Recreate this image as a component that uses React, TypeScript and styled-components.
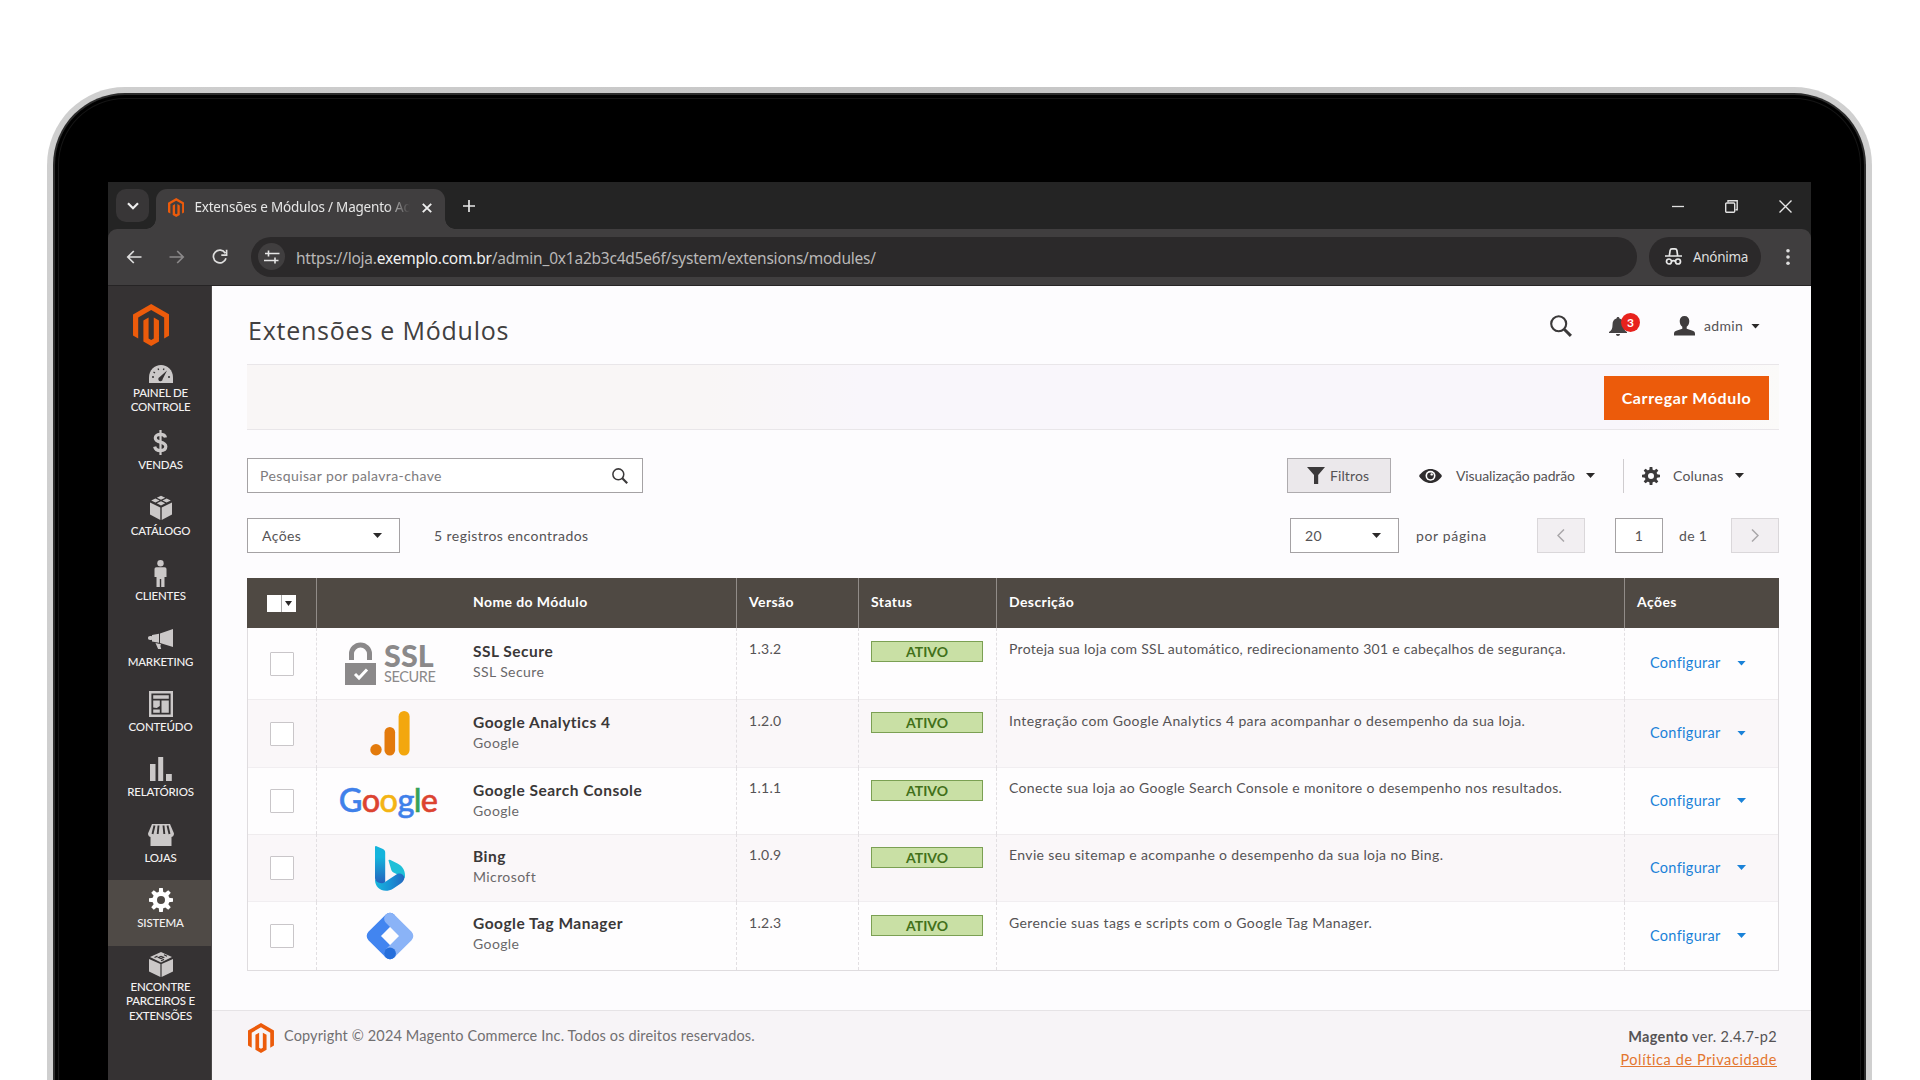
import React from "react";
import styled, { createGlobalStyle } from "styled-components";

const COLORS = {
  ORANGE: "#ec5b0b",
  SIDEBAR: "#353233",
  TOOLBAR: "#403e3f",
  STRIP: "#242424",
  PILL: "#2b292a",
  HEAD: "#4f4943",
  TEXT: "#555355",
  DARK: "#3a3838",
  BLUE: "#1a82d8",
  ICON: "#cbc8c8",
};

const UI_FONT = `"Noto Sans", "Open Sans", sans-serif`;
const PAGE_FONT = `Lato, "Noto Sans", sans-serif`;

const GlobalStyle = createGlobalStyle`
  * { box-sizing: border-box; }
  html, body { margin: 0; padding: 0; background: #fff; overflow: hidden; }
  svg { display: block; flex: none; }
`;

const Page = styled.div`
  width: 1920px;
  height: 1080px;
  overflow: hidden;
  padding: 87px 48px 0 47px;
  background: #fff;
`;

const Laptop = styled.div`
  height: 1100px;
  padding: 6px 6px 0;
  border-radius: 78px 78px 0 0;
  background: linear-gradient(90deg, #cfcfcf, #c6c6c6 50%, #d0d0d0);
`;

const Bezel = styled.div`
  height: 100%;
  padding: 87px 53px 0;
  border: 2px solid #2c2c2c;
  border-bottom: 0;
  border-radius: 72px 72px 0 0;
  background: #000;
  box-shadow: inset 0 0 0 3px #000, inset 0 0 0 4px #151515;
`;

const Screen = styled.div`
  width: 1703px;
  height: 898px;
  overflow: hidden;
  background: ${COLORS.STRIP};
  font-family: ${PAGE_FONT};
`;

/* browser chrome */

const TabStrip = styled.div`
  display: flex;
  align-items: flex-end;
  height: 47px;
  padding-left: 8px;
  color: #e6e6e6;
  font-family: ${UI_FONT};
`;

const TabSearch = styled.div`
  display: flex;
  align-items: center;
  justify-content: center;
  width: 33px;
  height: 33px;
  margin: 0 7px 7px 0;
  border-radius: 10px;
  background: #383637;
`;

const Tab = styled.div`
  position: relative;
  display: flex;
  align-items: center;
  width: 289px;
  height: 40px;
  padding: 0 13px 3px 12px;
  border-radius: 11px 11px 0 0;
  background: ${COLORS.TOOLBAR};

  &::before,
  &::after {
    content: "";
    position: absolute;
    bottom: 0;
    width: 10px;
    height: 10px;
  }
  &::before {
    left: -10px;
    background: radial-gradient(circle at 0 0, transparent 9.5px, ${COLORS.TOOLBAR} 10px);
  }
  &::after {
    right: -10px;
    background: radial-gradient(circle at 100% 0, transparent 9.5px, ${COLORS.TOOLBAR} 10px);
  }
`;

const TabTitle = styled.div`
  flex: 1;
  margin: -1px 0 0 10px;
  overflow: hidden;
  white-space: nowrap;
  font-size: 13.5px;
  letter-spacing: -0.2px;
  mask-image: linear-gradient(90deg, #000 192px, transparent 216px);
`;

const NewTab = styled.div`
  margin: 0 0 17px 18px;
`;

const WindowButtons = styled.div`
  display: flex;
  align-items: center;
  gap: 41px;
  margin: 0 19px 16px auto;
`;

const Toolbar = styled.div`
  display: flex;
  align-items: center;
  height: 57px;
  padding: 0 18px 1px 18px;
  border-radius: 9px 9px 0 0;
  border-bottom: 1px solid #262425;
  background: ${COLORS.TOOLBAR};
  font-family: ${UI_FONT};
  color: #dedede;
`;

const NavButtons = styled.div`
  display: flex;
  align-items: center;
  gap: 27px;
  width: 125px;
`;

const UrlBar = styled.div`
  display: flex;
  align-items: center;
  width: 1386px;
  height: 40px;
  padding-left: 7px;
  border-radius: 20px;
  background: ${COLORS.PILL};
`;

const SiteInfo = styled.div`
  display: flex;
  align-items: center;
  justify-content: center;
  width: 27px;
  height: 27px;
  margin-right: 11px;
  border-radius: 50%;
  background: #403e3f;
`;

const UrlText = styled.div`
  padding-top: 2px;
  font-size: 15.5px;
  letter-spacing: -0.22px;
  color: #b9b7b7;
  white-space: nowrap;

  b { font-weight: 400; color: #f1f1f1; }
`;

const Incognito = styled.div`
  display: flex;
  align-items: center;
  gap: 11px;
  width: 112px;
  height: 40px;
  margin: 0 24px 0 12px;
  padding-left: 16px;
  border-radius: 20px;
  background: ${COLORS.PILL};
  font-size: 13.5px;
  letter-spacing: -0.3px;
`;

/* admin shell */

const Shell = styled.div`
  display: flex;
  height: 794px;
`;

const Sidebar = styled.nav`
  width: 104px;
  height: 100%;
  padding-top: 18px;
  border-right: 1px solid #4b4849;
  background: ${COLORS.SIDEBAR};
`;

const SidebarLogo = styled.div`
  height: 46px;
  padding-left: 25px;
`;

const MenuItem = styled.div<{ $height: number; $active?: boolean }>`
  display: flex;
  flex-direction: column;
  align-items: center;
  height: ${({ $height }) => $height}px;
  padding-left: 2px;
  background: ${({ $active }) => ($active ? "#4f4a46" : "transparent")};
  color: ${({ $active }) => ($active ? "#fff" : COLORS.ICON)};
`;

const MenuIcon = styled.div<{ $drop?: number; $height?: number }>`
  display: flex;
  align-items: center;
  height: ${({ $height }) => $height ?? 36}px;
  padding-top: ${({ $drop }) => $drop ?? 4}px;
`;

const MenuLabel = styled.div`
  color: #f3f1f1;
  font-size: 11.5px;
  font-weight: 500;
  line-height: 14.3px;
  letter-spacing: -0.2px;
  text-align: center;
  white-space: pre-line;
`;

const Main = styled.main`
  display: flex;
  flex-direction: column;
  flex: 1;
  background: #fdfcfe;
  color: ${COLORS.TEXT};
`;

const Header = styled.header`
  display: flex;
  height: 78px;
  padding: 0 51px 0 36px;
`;

const Title = styled.h1`
  flex: 1;
  margin: 26px 0 0;
  font-family: "Open Sans", sans-serif;
  font-size: 25px;
  line-height: 36px;
  font-weight: 400;
  letter-spacing: 0.77px;
  color: #413f40;
`;

const HeaderTools = styled.div`
  display: flex;
  align-items: center;
  height: 24px;
  margin-top: 28px;
`;

const Notifications = styled.div`
  position: relative;
  margin: 0 47px 0 37px;
`;

const Badge = styled.span`
  position: absolute;
  top: -4px;
  left: 12px;
  width: 19px;
  height: 19px;
  border-radius: 50%;
  background: #e8221d;
  color: #fff;
  font-size: 12px;
  font-weight: 700;
  line-height: 19px;
  text-align: center;
`;

const UserName = styled.span`
  width: 47px;
  margin: -1px 0 0 9px;
  font-size: 14px;
  letter-spacing: 0.35px;
`;

const Caret = styled.i<{ $color?: string; $width?: number }>`
  flex: none;
  width: ${({ $width }) => $width || 9}px;
  height: 5px;
  background: ${({ $color }) => $color || "#2b2929"};
  clip-path: polygon(0 0, 100% 0, 50% 100%);
`;

const ActionBand = styled.div`
  display: flex;
  align-items: center;
  justify-content: flex-end;
  height: 66px;
  margin: 0 32px 0 35px;
  padding: 2px 10px 0 0;
  border: solid #e9e6e9;
  border-width: 1px 0;
  background: linear-gradient(90deg, #f9f6f6 30%, #f9f6fb 40%, #f9f6fb 90%, #fbfaf9);
`;

const UploadButton = styled.button`
  width: 165px;
  height: 44px;
  padding: 0 0 2px;
  border: 0;
  background: ${COLORS.ORANGE};
  color: #fff;
  font-family: inherit;
  font-size: 16px;
  font-weight: 700;
  letter-spacing: 0.62px;
`;

const ControlRow = styled.div<{ $top: number }>`
  display: flex;
  align-items: center;
  height: 35px;
  margin: ${({ $top }) => $top}px 32px 0 35px;
  font-size: 14px;
  letter-spacing: 0.4px;
  white-space: nowrap;
`;

const Field = styled.div<{ $width: number; $left?: number; $right?: number; $muted?: boolean }>`
  display: flex;
  align-items: center;
  justify-content: space-between;
  width: ${({ $width }) => $width}px;
  height: 35px;
  padding: 0 ${({ $right }) => $right ?? 17}px 0 ${({ $left }) => $left ?? 14}px;
  border: 1px solid #a5a2a4;
  background: #fff;
  color: ${({ $muted }) => ($muted ? "#7d7b7d" : COLORS.TEXT)};
`;

const Spacer = styled.div`
  flex: 1;
`;

const FilterButton = styled.div`
  display: flex;
  align-items: center;
  gap: 5px;
  width: 104px;
  height: 35px;
  margin-right: 28px;
  padding-left: 19px;
  border: 1px solid #aeabae;
  background: #ebe8eb;
  letter-spacing: 0.1px;
`;

const ControlText = styled.span<{ $width: number; $left?: number; $track?: number }>`
  width: ${({ $width }) => $width}px;
  margin-left: ${({ $left }) => $left ?? 0}px;
  letter-spacing: ${({ $track }) => $track ?? 0.3}px;
`;

const Divider = styled.div`
  width: 1px;
  height: 34px;
  margin: 0 18px 0 28px;
  background: #cfcccf;
`;

const PageButton = styled.div`
  display: flex;
  align-items: center;
  justify-content: center;
  width: 48px;
  height: 35px;
  border: 1px solid #dad7da;
  background: #f2eff2;
`;

const PageInput = styled.div`
  display: flex;
  align-items: center;
  justify-content: center;
  width: 48px;
  height: 35px;
  margin-left: 30px;
  border: 1px solid #a5a2a4;
  background: #fff;
`;

/* grid */

const Grid = styled.div`
  width: 1532px;
  margin: 25px 0 0 35px;
  border: 1px solid #dfdcdf;
  border-top: 0;
`;

const COLUMNS = "69px 420px 122px 138px 628px 1fr";

const HeadRow = styled.div`
  display: grid;
  grid-template-columns: ${COLUMNS};
  height: 50px;
  margin: 0 -1px;
  padding: 0 1px;
  background: ${COLORS.HEAD};
`;

const HeadCell = styled.div<{ $left: number }>`
  padding-left: ${({ $left }) => $left}px;
  border-right: 1px solid #918c88;
  color: #fff;
  font-size: 14px;
  font-weight: 700;
  line-height: 48px;
  letter-spacing: 0.4px;

  &:last-child { border-right: 0; }
`;

const SelectAll = styled.div`
  display: flex;
  align-items: center;
  width: 29px;
  height: 17px;
  margin-top: 17px;
  padding-left: 15px;
  background: linear-gradient(90deg, #fff 14px, #aaa 14px, #aaa 15px, #fff 15px);

  i { margin: 0 3px; }
`;

const Row = styled.div<{ $height: number }>`
  display: grid;
  grid-template-columns: ${COLUMNS};
  height: ${({ $height }) => $height}px;

  &:nth-child(odd) {
    background: #faf7f9;
    box-shadow: inset 0 1px #efecee, inset 0 -1px #f1eef1;
  }
  &:nth-child(even) { background: #fefdfe; }
`;

const Cell = styled.div<{ $left?: number; $top?: number; $track?: number }>`
  padding: ${({ $top }) => $top ?? 0}px 0 0 ${({ $left }) => $left ?? 0}px;
  border-right: 1px dashed #e2dfe2;
  font-size: 14px;
  line-height: 20px;
  letter-spacing: ${({ $track }) => $track ?? 0.3}px;
  white-space: nowrap;

  &:last-child { border-right: 0; }
`;

const CheckCell = styled(Cell)`
  display: flex;
  align-items: center;
  padding: 0 0 0 22px;
`;

const CheckBox = styled.div`
  width: 24px;
  height: 24px;
  border: 1px solid #c9c6c9;
  border-radius: 1px;
  background: #fff;
`;

const ModuleCell = styled(Cell)`
  display: flex;
  padding-top: 0;
`;

const ModuleLogo = styled.div`
  display: flex;
  align-items: center;
  justify-content: center;
  width: 145px;
  margin-right: 11px;
`;

const ModuleInfo = styled.div<{ $top: number }>`
  padding-top: ${({ $top }) => $top}px;
`;

const ModuleName = styled.div`
  font-size: 15.5px;
  font-weight: 700;
  line-height: 22px;
  letter-spacing: 0.5px;
  color: ${COLORS.DARK};
`;

const ModuleVendor = styled.div`
  line-height: 20px;
  letter-spacing: 0.4px;
  color: #6a686a;
`;

const Status = styled.div`
  width: 112px;
  height: 21px;
  border: 1px solid #7ba053;
  background: #c9e0a5;
  color: #42701a;
  font-size: 14px;
  font-weight: 700;
  line-height: 19px;
  letter-spacing: 0;
  text-align: center;
`;

const ActionCell = styled(Cell)`
  display: flex;
  align-items: center;
  padding: 0 0 1px 25px;
  color: ${COLORS.BLUE};
`;

const ActionLabel = styled.span`
  width: 87px;
  font-size: 14.5px;
`;

const Footer = styled.footer`
  display: flex;
  flex: 1;
  margin-top: 39px;
  padding: 12px 34px 0 36px;
  border-top: 1px solid #e6e3e6;
  background: #f7f4f7;
  font-size: 14.5px;
  line-height: 24px;
`;

const Copyright = styled.div`
  flex: 1;
  margin-left: 10px;
  padding-top: 1px;
  letter-spacing: 0.14px;
  color: #716f71;
`;

const Version = styled.div`
  padding-top: 2px;
  line-height: 23px;
  text-align: right;
  letter-spacing: 0.32px;

  a {
    color: #e3762f;
    letter-spacing: 0.6px;
    text-decoration: underline;
  }
`;

/* logos */

const GoogleWord = styled.div`
  display: flex;
  margin: -3px 0 0 -3px;
  font-size: 32.5px;
  line-height: 36px;
  letter-spacing: -0.7px;
  font-weight: 500;
  -webkit-text-stroke: 0.5px currentColor;
`;

const Letter = styled.span<{ $color: string }>`
  color: ${({ $color }) => $color};
`;

const SslLogo = styled.div`
  display: flex;
  gap: 8px;
  padding-left: 1px;
  color: #8b898a;
`;

const SslText = styled.div`
  width: 51px;
  padding-top: 1px;

  strong {
    display: block;
    font-size: 30.5px;
    font-weight: 900;
    line-height: 26px;
    letter-spacing: 0.1px;
  }
  span {
    display: block;
    font-size: 14.5px;
    line-height: 18px;
    letter-spacing: -0.4px;
  }
`;

const Magento: React.FC<{ size: number }> = ({ size }) => (
  <svg width={size * 0.866} height={size} viewBox="1.6 0 20.8 24" fill={COLORS.ORANGE}>
    <path d="M12 24l-4.455-2.572v-12l2.97-1.715v12.001l1.485.902 1.485-.902V7.713l2.971 1.715v12L12 24zM22.391 6v12l-2.969 1.714V7.713L12 3.43 4.574 7.713v12.001L1.609 18V6L12 0l10.391 6z" />
  </svg>
);

const SslSecure = () => (
  <SslLogo>
    <svg width="31" height="44" viewBox="0 0 31 44">
      <path d="M6.5 19V13a9 9 0 0 1 18 0v6" fill="none" stroke="#8b898a" strokeWidth="5" />
      <path d="M0 22h31v22H0z" fill="#8b898a" />
      <path d="M10 33l4 4 8-8.5" fill="none" stroke="#fff" strokeWidth="3" />
    </svg>
    <SslText>
      <strong>SSL</strong>
      <span>SECURE</span>
    </SslText>
  </SslLogo>
);

const Analytics = () => (
  <svg width="40" height="45" viewBox="0 0 40 45">
    <circle cx="6" cy="38.7" r="5.7" fill="#e37a0c" />
    <rect x="14.5" y="16" width="10.6" height="28.5" rx="5.3" fill="#e37a0c" />
    <rect x="28.6" y="0" width="11" height="44.5" rx="5.5" fill="#f3a70e" />
  </svg>
);

const Google = () => (
  <GoogleWord>
    <Letter $color="#3f80ea">G</Letter>
    <Letter $color="#dc4330">o</Letter>
    <Letter $color="#f4b414">o</Letter>
    <Letter $color="#3f80ea">g</Letter>
    <Letter $color="#36a257">l</Letter>
    <Letter $color="#dc4330">e</Letter>
  </GoogleWord>
);

const Bing = () => (
  <svg width="30" height="45" viewBox="0 0 30 45">
    <defs>
      <linearGradient id="stem" x1="0" y1="0" x2="0" y2="1">
        <stop offset="0.3" stopColor="#14b4dc" />
        <stop offset="1" stopColor="#2461bd" />
      </linearGradient>
      <linearGradient id="hook" x1="0" y1="0" x2="1" y2="0">
        <stop offset="0" stopColor="#18b8dc" />
        <stop offset="0.5" stopColor="#1893d6" />
        <stop offset="1" stopColor="#2368bf" />
      </linearGradient>
    </defs>
    <path d="M13.5 14.5c0-1 1-1 2-.5l7 3.5c4.500 2.200 7.500 6.500 7.500 11.500v3l-7.500-3.500-4-2c-1-.6-1.700-1.300-2.200-2.500z" fill="#1fc0d8" />
    <path d="M0 32c0 3 5 5 10 4l12.500-8.300c4-1 8 2 6.500 5.800-.8 2-2 3.200-4 4.500l-7 4.800C9 48 0 42.500 0 34z" fill="url(#hook)" />
    <path d="M0 1c0-.8.6-1.200 1.500-.8L8 3c1.500.8 2.200 1.800 2.200 3.500V36c-4 3-10.200 0-10.200-4z" fill="url(#stem)" />
  </svg>
);

const TagManager = () => (
  <svg width="48" height="48" viewBox="0 0 48 48" fill="none" strokeWidth="11.800" strokeLinejoin="round" strokeLinecap="round">
    <path d="M24 6.600L6.600 24 24 41.400" stroke="#4285f0" />
    <path d="M24 6.600L41.400 24 24 41.400" stroke="#8ab3f7" />
    <circle cx="24" cy="41.400" r="5.900" fill="#256edb" />
  </svg>
);

/* sidebar icons */

const DashboardIcon = () => (
  <svg width="24" height="18" viewBox="0 0 24 18">
    <path d="M0 18v-5.500C0 5 5.500 0 12 0s12 5 12 12.500V18z" fill="currentColor" />
    <path d="M3 12h2M4.500 7l1.500 1M9 3.500l.7 1.600M15 3.500l-.6 1.600M21 12h-2" stroke="#353233" strokeWidth="1.300" />
    <path d="M18 5.500l-4.300 8.600a2.200 2.200 0 1 1-3-2z" fill="#353233" />
  </svg>
);

const DollarIcon = () => (
  <svg width="15" height="25" viewBox="0 0 15 25" fill="none" stroke="currentColor">
    <path d="M12.500 7.500C12 5.300 10 4.300 7.500 4.300 4.600 4.300 2.300 5.600 2.300 8c0 5.500 10.500 2.800 10.500 8.600 0 2.600-2.300 4-5.300 4-3.200 0-5.300-1.400-5.800-4" strokeWidth="3.200" />
    <path d="M7.500 0v25" strokeWidth="2.200" />
  </svg>
);

const CubeIcon = () => (
  <svg width="22" height="25" viewBox="0 0 22 25" fill="currentColor">
    <path d="M0 7.500l10.300 5V25L0 19.500zM22 7.500l-10.300 5V25L22 19.500z" />
    <path d="M11 0l4.200 2L11 4 6.800 2zM5.400 2.700l4.200 2-4.200 2-4.200-2zM16.600 2.700l4.200 2-4.200 2-4.200-2zM11 5.400l4.200 2-4.200 2.200-4.200-2.200z" transform="translate(0 .8)" />
  </svg>
);

const PartnersIcon = () => (
  <svg width="24" height="25" viewBox="0 0 24 25" fill="currentColor">
    <path d="M0 7l11.400 5V25L0 19.500zM24 7l-11.400 5V25L24 19.500z" />
    <path d="M12 0l11 5-11 5.500L1 5z" />
    <path d="M5.500 5.500l3-1.400M15 2.800l3 1.400M12 8.800l3-1.400M9.500 5.500l2.500 1 2.500-1.200-2.500-1z" fill="none" stroke="#353233" strokeWidth="1.200" />
  </svg>
);

const PersonIcon = () => (
  <svg width="13" height="27" viewBox="0 0 13 27" fill="currentColor">
    <circle cx="6.500" cy="3.200" r="3.200" />
    <path d="M2.500 7.200h8c1.400 0 2 .8 2 2V17h-2v10H7.200v-8H5.800v8H2.500V17h-2V9.200c0-1.200.6-2 2-2z" />
  </svg>
);

const MegaphoneIcon = () => (
  <svg width="25" height="20" viewBox="0 0 25 20" fill="currentColor">
    <path d="M25 0v18L12 14V4.500zM11 4.800v9l-7-1.200v-1.800C1 11.500 0 10.500 0 9s1-2.500 4-1.800V6z" />
    <path d="M7.500 14l5.500 1.300-.6 1.700.8 3-3 .2z" />
  </svg>
);

const ContentIcon = () => (
  <svg width="24" height="26" viewBox="0 0 24 26">
    <path d="M1.200 1.200h21.600v23.600H1.200z" fill="none" stroke="currentColor" strokeWidth="2.400" />
    <path d="M4.200 4.200h15.600v3.600H4.200zM12.500 9.500h7.300v12.300h-7.300zM4.200 9.500h6.600v5.500l-3 2-3.600-.6zM4.200 18.500h6.600v3.300H4.200z" fill="currentColor" />
  </svg>
);

const ReportsIcon = () => (
  <svg width="22" height="24" viewBox="0 0 22 24" fill="currentColor">
    <path d="M0 7h5.500v17H0zM8.200 0h5v24h-5zM16 17h5.800v7H16z" />
  </svg>
);

const StoreIcon = () => (
  <svg width="26" height="22" viewBox="0 0 26 22" fill="currentColor">
    <path d="M2.500 12h21v10h-21z" />
    <path d="M4 0h18l4 9.500c0 2.500-1.500 3.500-3 3.500H3c-1.500 0-3-1-3-3.500z" />
    <path d="M6.500 1.500L4.500 10M10.500 1.500L9.700 10M15.500 1.500l.8 8.500M19.500 1.500l2 8.500" stroke="#353233" strokeWidth="1.900" />
  </svg>
);

const TEETH = [0, 45, 90, 135, 180, 225, 270, 315];

const GearIcon: React.FC<{ size: number; color?: string }> = ({ size, color = "currentColor" }) => (
  <svg width={size} height={size} viewBox="0 0 24 24">
    <circle cx="12" cy="12" r="6.300" fill="none" stroke={color} strokeWidth="4.600" />
    {TEETH.map((angle) => (
      <path key={angle} d="M9.700 4.500l.5-4.500h3.600l.5 4.500z" fill={color} transform={`rotate(${angle} 12 12)`} />
    ))}
  </svg>
);

const SearchIcon: React.FC<{ size: number }> = ({ size }) => (
  <svg width={size} height={size} viewBox="0 0 22 22" fill="none" stroke="#3b393a">
    <circle cx="8.700" cy="8.700" r="7.500" strokeWidth="2.100" />
    <path d="M14.200 14.200l6.700 6.700" strokeWidth="3" />
  </svg>
);

const MENU = [
  { label: "PAINEL DE\nCONTROLE", icon: <DashboardIcon />, height: 72.4, drop: 11 },
  { label: "VENDAS", icon: <DollarIcon />, height: 65.4 },
  { label: "CATÁLOGO", icon: <CubeIcon />, height: 65.4 },
  { label: "CLIENTES", icon: <PersonIcon />, height: 65.4 },
  { label: "MARKETING", icon: <MegaphoneIcon />, height: 65.4 },
  { label: "CONTEÚDO", icon: <ContentIcon />, height: 65.4 },
  { label: "RELATÓRIOS", icon: <ReportsIcon />, height: 65.4 },
  { label: "LOJAS", icon: <StoreIcon />, height: 65.4 },
  { label: "SISTEMA", icon: <GearIcon size={24} />, height: 65.4, active: true },
  { label: "ENCONTRE\nPARCEIROS E\nEXTENSÕES", icon: <PartnersIcon />, height: 90, iconHeight: 34.5 },
];

const MODULES = [
  {
    name: "SSL Secure", vendor: "SSL Secure", version: "1.3.2", logo: <SslSecure />,
    height: 71, top: 12, textTop: 11, badgeTop: 13, track: 0.28,
    text: "Proteja sua loja com SSL automático, redirecionamento 301 e cabeçalhos de segurança.",
  },
  {
    name: "Google Analytics 4", vendor: "Google", version: "1.2.0", logo: <Analytics />,
    height: 69, top: 12, textTop: 12, badgeTop: 13, track: 0.39,
    text: "Integração com Google Analytics 4 para acompanhar o desempenho da sua loja.",
  },
  {
    name: "Google Search Console", vendor: "Google", version: "1.1.1", logo: <Google />,
    height: 66, top: 11, textTop: 10, badgeTop: 12, track: 0.35,
    text: "Conecte sua loja ao Google Search Console e monitore o desempenho nos resultados.",
  },
  {
    name: "Bing", vendor: "Microsoft", version: "1.0.9", logo: <Bing />,
    height: 68, top: 11, textTop: 11, badgeTop: 13, track: 0.37,
    text: "Envie seu sitemap e acompanhe o desempenho da sua loja no Bing.",
  },
  {
    name: "Google Tag Manager", vendor: "Google", version: "1.2.3", logo: <TagManager />,
    height: 68, top: 10, textTop: 11, badgeTop: 13, track: 0.39,
    text: "Gerencie suas tags e scripts com o Google Tag Manager.",
  },
];

const Browser: React.FC = () => (
  <>
    <TabStrip>
      <TabSearch>
        <svg width="12" height="8" viewBox="0 0 12 8" fill="none" stroke="#eee" strokeWidth="2.200">
          <path d="M1 1.200l5 5 5-5" />
        </svg>
      </TabSearch>
      <Tab>
        <Magento size={19} />
        <TabTitle>Extensões e Módulos / Magento Ad</TabTitle>
        <svg width="10" height="10" viewBox="0 0 10 10" stroke="#eee" strokeWidth="1.900">
          <path d="M.8.8l8.400 8.400M9.200.8L.8 9.200" />
        </svg>
      </Tab>
      <NewTab>
        <svg width="12" height="12" viewBox="0 0 12 12" stroke="#e6e6e6" strokeWidth="1.700">
          <path d="M6 0v12M0 6h12" />
        </svg>
      </NewTab>
      <WindowButtons>
        <svg width="12" height="13" viewBox="0 0 12 13" stroke="#e0e0e0" strokeWidth="1.300">
          <path d="M0 6.500h12" />
        </svg>
        <svg width="13" height="13" viewBox="0 0 13 13" fill="none" stroke="#e0e0e0" strokeWidth="1.400">
          <rect x=".7" y="3" width="9" height="9.300" rx="1" />
          <path d="M3 2.500V.8h9.200v9H10.500" />
        </svg>
        <svg width="13" height="13" viewBox="0 0 13 13" stroke="#e6e6e6" strokeWidth="1.400">
          <path d="M.5.5l12 12M12.500.5l-12 12" />
        </svg>
      </WindowButtons>
    </TabStrip>
    <Toolbar>
      <NavButtons>
        <svg width="16" height="14" viewBox="0 0 16 14" fill="none" stroke="#dedede" strokeWidth="1.700">
          <path d="M15.500 7H1.800M7.800 1L1.800 7l6 6" />
        </svg>
        <svg width="16" height="14" viewBox="0 0 16 14" fill="none" stroke="#8b898a" strokeWidth="1.700">
          <path d="M.5 7h13.700M8.200 1l6 6-6 6" />
        </svg>
        <svg width="16" height="16" viewBox="0 0 16 16" fill="none" stroke="#dedede" strokeWidth="1.700">
          <path d="M14 9.200A6.400 6.400 0 1 1 13.300 4.200M14.600.8v5.400H9.300" />
        </svg>
      </NavButtons>
      <UrlBar>
        <SiteInfo>
          <svg width="16" height="14" viewBox="0 0 16 14" fill="none" stroke="#e6e6e6" strokeWidth="1.600">
            <path d="M1 3.500h14.500M4.500 .5v6M0 10.500h14.500M11 7.500v6" />
          </svg>
        </SiteInfo>
        <UrlText>
          https://loja.<b>exemplo.com.br</b>/admin_0x1a2b3c4d5e6f/system/extensions/modules/
        </UrlText>
      </UrlBar>
      <Incognito>
        <svg width="17" height="17" viewBox="0 0 17 17" fill="none" stroke="#e8e8e8" strokeWidth="1.700">
          <path d="M0 8h17M4.300 8l.8-5.500C5.300 1.300 6 .9 7 .9h3c1 0 1.700.4 1.900 1.600L12.700 8M6.500 13.200q2-1.200 4 0" />
          <circle cx="4" cy="13.500" r="2.500" />
          <circle cx="13" cy="13.500" r="2.500" />
        </svg>
        Anónima
      </Incognito>
      <svg width="6" height="18" viewBox="0 0 6 18" fill="#dedede">
        <circle cx="3" cy="2.800" r="1.800" />
        <circle cx="3" cy="9" r="1.800" />
        <circle cx="3" cy="15.200" r="1.800" />
      </svg>
    </Toolbar>
  </>
);

const Controls: React.FC = () => (
  <>
    <ControlRow $top={28}>
      <Field $width={396} $left={12} $right={14} $muted>
        Pesquisar por palavra-chave
        <SearchIcon size={16} />
      </Field>
      <Spacer />
      <FilterButton>
        <svg width="18" height="17" viewBox="0 0 18 17" fill="#3b393a">
          <path d="M0 0h18l-6.800 8v9H7V8z" />
        </svg>
        Filtros
      </FilterButton>
      <svg width="23" height="14" viewBox="0 0 23 14">
        <path d="M0 7c3-4.700 7-7 11.500-7S20 2.300 23 7c-3 4.700-7 7-11.500 7S3 11.700 0 7z" fill="#2f2d2e" />
        <circle cx="11.500" cy="6.800" r="5" fill="#fff" />
        <circle cx="11.500" cy="6.800" r="3.400" fill="#2f2d2e" />
        <circle cx="12.700" cy="5.400" r="1.200" fill="#fff" />
      </svg>
      <ControlText $width={130} $left={14} $track={-0.13}>Visualização padrão</ControlText>
      <Caret />
      <Divider />
      <GearIcon size={18} color="#3b393a" />
      <ControlText $width={62} $left={13} $track={0.2}>Colunas</ControlText>
      <Caret />
      <ControlText $width={35} />
    </ControlRow>
    <ControlRow $top={25}>
      <Field $width={153}>
        Ações
        <Caret />
      </Field>
      <ControlText $width={200} $left={34} $track={0.45}>5 registros encontrados</ControlText>
      <Spacer />
      <Field $width={109} $left={14}>
        20
        <Caret />
      </Field>
      <ControlText $width={121} $left={17} $track={0.65}>por página</ControlText>
      <PageButton>
        <svg width="8" height="13" viewBox="0 0 8 13" fill="none" stroke="#a9a6a9" strokeWidth="1.500">
          <path d="M7 .5l-6 6 6 6" />
        </svg>
      </PageButton>
      <PageInput>1</PageInput>
      <ControlText $width={52} $left={16}>de 1</ControlText>
      <PageButton>
        <svg width="8" height="13" viewBox="0 0 8 13" fill="none" stroke="#a9a6a9" strokeWidth="1.500">
          <path d="M1 .5l6 6-6 6" />
        </svg>
      </PageButton>
    </ControlRow>
  </>
);

const ModuleGrid: React.FC = () => (
  <Grid>
    <HeadRow>
      <HeadCell $left={19}>
        <SelectAll>
          <Caret $width={7} />
        </SelectAll>
      </HeadCell>
      <HeadCell $left={156}>Nome do Módulo</HeadCell>
      <HeadCell $left={12}>Versão</HeadCell>
      <HeadCell $left={12}>Status</HeadCell>
      <HeadCell $left={12}>Descrição</HeadCell>
      <HeadCell $left={12}>Ações</HeadCell>
    </HeadRow>
    {MODULES.map(({ name, vendor, version, logo, height, top, textTop, badgeTop, track, text }) => (
      <Row key={name} $height={height}>
        <CheckCell>
          <CheckBox />
        </CheckCell>
        <ModuleCell>
          <ModuleLogo>{logo}</ModuleLogo>
          <ModuleInfo $top={top}>
            <ModuleName>{name}</ModuleName>
            <ModuleVendor>{vendor}</ModuleVendor>
          </ModuleInfo>
        </ModuleCell>
        <Cell $left={12} $top={textTop}>{version}</Cell>
        <Cell $left={12} $top={badgeTop}>
          <Status>ATIVO</Status>
        </Cell>
        <Cell $left={12} $top={textTop} $track={track}>{text}</Cell>
        <ActionCell>
          <ActionLabel>Configurar</ActionLabel>
          <Caret $color={COLORS.BLUE} />
        </ActionCell>
      </Row>
    ))}
  </Grid>
);

const App: React.FC = () => (
  <Page>
    <GlobalStyle />
    <Laptop>
      <Bezel>
        <Screen>
          <Browser />
          <Shell>
            <Sidebar>
              <SidebarLogo>
                <Magento size={42} />
              </SidebarLogo>
              {MENU.map(({ label, icon, height, active, drop, iconHeight }) => (
                <MenuItem key={label} $height={height} $active={active}>
                  <MenuIcon $drop={drop} $height={iconHeight}>{icon}</MenuIcon>
                  <MenuLabel>{label}</MenuLabel>
                </MenuItem>
              ))}
            </Sidebar>
            <Main>
              <Header>
                <Title>Extensões e Módulos</Title>
                <HeaderTools>
                  <SearchIcon size={22} />
                  <Notifications>
                    <svg width="18" height="19" viewBox="0 0 18 19" fill="#454243">
                      <path d="M9 0c.9 0 1.500.7 1.500 1.500C13.300 2.300 14.500 4.500 14.500 8c0 3.500.8 5.500 3.500 7v1H0v-1c2.700-1.500 3.500-3.500 3.500-7 0-3.500 1.200-5.700 4-6.500C7.500.7 8.100 0 9 0zM7 17h4c0 1.300-.8 2-2 2s-2-.7-2-2z" />
                    </svg>
                    <Badge>3</Badge>
                  </Notifications>
                  <svg width="21" height="20" viewBox="0 0 21 20" fill="#3f3c3d">
                    <path d="M10.500 0c3 0 4.800 2 4.800 5 0 2.500-1 4.600-2.600 5.800v2l6 2c1.500.5 2.300 1.300 2.300 3V19.500H0V17.800c0-1.700.8-2.500 2.300-3l6-2v-2C6.700 9.600 5.700 7.500 5.700 5c0-3 1.800-5 4.800-5z" />
                  </svg>
                  <UserName>admin</UserName>
                  <Caret />
                </HeaderTools>
              </Header>
              <ActionBand>
                <UploadButton>Carregar Módulo</UploadButton>
              </ActionBand>
              <Controls />
              <ModuleGrid />
              <Footer>
                <Magento size={30} />
                <Copyright>Copyright © 2024 Magento Commerce Inc. Todos os direitos reservados.</Copyright>
                <Version>
                  <b>Magento</b> ver. 2.4.7-p2
                  <br />
                  <a>Política de Privacidade</a>
                </Version>
              </Footer>
            </Main>
          </Shell>
        </Screen>
      </Bezel>
    </Laptop>
  </Page>
);

export default App;
